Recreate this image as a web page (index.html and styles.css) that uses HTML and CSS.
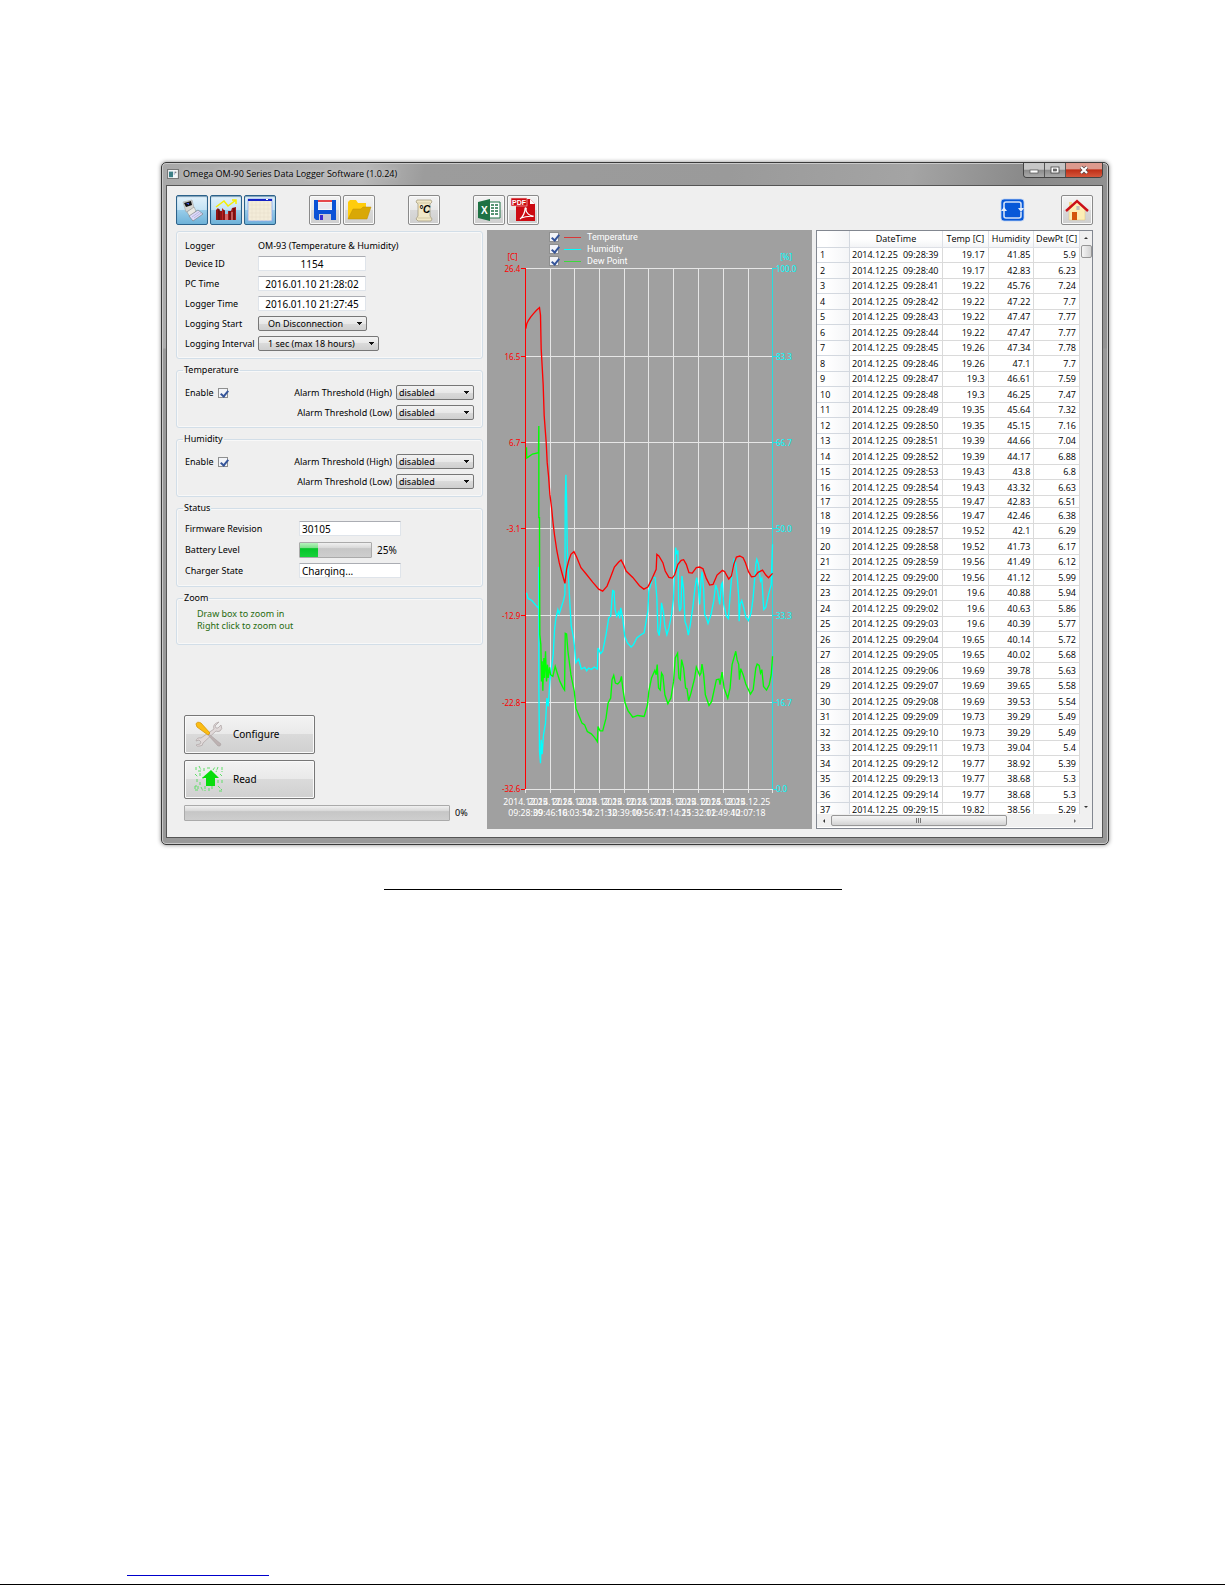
FILE: index.html
```
<!DOCTYPE html>
<html lang="en">
<head>
    <meta charset="UTF-8">
    <meta name="viewport" content="width=device-width, initial-scale=1.0">
    <title>Omega OM-90 Series Data Logger Software</title>
    <link rel="stylesheet" href="styles.css">
</head>
<body>

    <main class="window">
        <header class="titlebar">
            <svg class="app-icon" width="12" height="10" viewBox="0 0 12 10">
                <rect width="12" height="10" fill="#f4f6f8"/>
                <rect x="1" y="2" width="5" height="7" fill="#3c7f86"/>
                <rect x="7" y="2" width="1" height="4" fill="#8a9cc0"/>
                <rect x="9" y="2" width="1" height="2" fill="#333"/>
            </svg>
            <h1 class="title">Omega OM-90 Series Data Logger Software (1.0.24)</h1>
            <div class="window-buttons">
                <button class="win-btn" aria-label="Minimize">
                    <svg width="10" height="10" viewBox="0 0 10 10"><rect x="1" y="5" width="8" height="3" fill="#fff" stroke="#555" stroke-width=".7"/></svg>
                </button>
                <button class="win-btn" aria-label="Maximize">
                    <svg width="10" height="10" viewBox="0 0 10 10"><rect x="1" y="2" width="8" height="6" fill="#fff" stroke="#444" stroke-width=".8"/><rect x="3.500" y="4" width="3" height="2" fill="#777" stroke="#444" stroke-width=".6"/></svg>
                </button>
                <button class="win-btn close" aria-label="Close">
                    <svg width="10" height="10" viewBox="0 0 10 10"><path d="M2 2l6 6M8 2l-6 6" stroke="#544" stroke-width="3.600"/><path d="M2 2l6 6M8 2l-6 6" stroke="#fff" stroke-width="2.200"/></svg>
                </button>
            </div>
        </header>

        <div class="client">
            <div class="toolbar">
                <div class="tool-group">
                    <button class="tool active" aria-label="Logger">
                        <svg width="24" height="24" viewBox="0 0 24 24">
                            <path d="M3 4l9-2 2 8-8 4z" fill="#d6d6d2" stroke="#999" stroke-width=".5"/>
                            <path d="M4 5l7-2 1 4-6 2z" fill="#111"/>
                            <path d="M6 5l3 0 0 2z" fill="#4455ee"/>
                            <path d="M7 14l7-5 2 4-6 6z" fill="#e9e9e4" stroke="#888" stroke-width=".5"/>
                            <path d="M9 18l9-6 5 4-10 7z" fill="#dcd9f8" stroke="#777" stroke-width=".6"/>
                            <path d="M12 19l7-5M14 20l7-5" stroke="#a9a7d2" stroke-width=".7"/>
                        </svg>
                    </button>
                    <button class="tool active" aria-label="Graph">
                        <svg width="24" height="24" viewBox="0 0 24 24">
                            <path d="M2 22V12l2-2 2 3 2 0V22z" fill="#8e1515"/>
                            <path d="M8 22V10l3 3V22z" fill="#c02222"/>
                            <path d="M11 22v-6h3v6z" fill="#d86a6a"/>
                            <path d="M14 22v-9l3 0 1-3 4-1v13z" fill="#a51b1b"/>
                            <path d="M5 11v11M10 12v10M16 13v9M20 10v12" stroke="#4e0909"/>
                            <path d="M18 14v8" stroke="#e29a9a"/>
                            <path d="M2 9l8-6 4 5 8-6M18 2h4v4" fill="none" stroke="#f6ee00" stroke-width="1.500"/>
                        </svg>
                    </button>
                    <button class="tool active" aria-label="Table">
                        <svg width="26" height="24" viewBox="0 0 26 24">
                            <rect x="1" y="1" width="24" height="22" fill="#f3ecd9" stroke="#8ca6ee" stroke-width=".8"/>
                            <rect x="1" y="1" width="24" height="2" fill="#1522c4"/>
                            <rect x="19" y="1" width="2" height="1" fill="#fff"/>
                            <path d="M1 7h24M1 11h24M1 15h24M1 19h24M5 3v20M9 3v20M13 3v20M17 3v20M21 3v20" stroke="#e4dcc8" stroke-width=".5"/>
                        </svg>
                    </button>
                </div>
                <div class="tool-group">
                    <button class="tool" aria-label="Save">
                        <svg width="24" height="24" viewBox="0 0 24 24">
                            <path d="M1 2h22v20H3l-2-2z" fill="#0a51d6"/>
                            <rect x="5" y="2" width="14" height="10" fill="#f5f5f8"/>
                            <rect x="5" y="2" width="14" height="2" fill="#e5484e"/>
                            <path d="M5 6h14M5 8h14M5 10h14" stroke="#ccd" stroke-width=".6"/>
                            <rect x="6" y="16" width="12" height="6" fill="#c7c7d4"/>
                            <rect x="7" y="17" width="3" height="5" fill="#3a2ad0"/>
                        </svg>
                    </button>
                    <button class="tool" aria-label="Open">
                        <svg width="26" height="24" viewBox="0 0 26 24">
                            <path d="M2 21V4l2-2h6l2 3h8v5z" fill="#ffcc0d"/>
                            <path d="M2 21l5-10h8l2-2h8l-4 12z" fill="#d9a806" stroke="#c09000" stroke-width=".5"/>
                        </svg>
                    </button>
                </div>
                <div class="tool-group">
                    <button class="tool" aria-label="Temperature units">
                        <svg class="unit-icon" width="22" height="24" viewBox="0 0 22 24">
                            <path d="M4 2h14l1 2-2 2v12l2 3-1 2H5l-2-2 2-3V6L3 4z" fill="#f1e8c8" stroke="#9c9477" stroke-width=".7"/>
                            <path d="M4 5h13M5 20h13" stroke="#c5bb96" stroke-width=".7"/>
                            <text x="6" y="15">°C</text>
                        </svg>
                    </button>
                </div>
                <div class="tool-group">
                    <button class="tool" aria-label="Export to Excel">
                        <svg class="excel-icon" width="24" height="24" viewBox="0 0 24 24">
                            <path d="M12 4h11v16H12z" fill="#fff" stroke="#1f7244"/>
                            <path d="M14 7h3M18 7h3M14 10h3M18 10h3M14 13h3M18 13h3M14 16h3M18 16h3" stroke="#1f7244" stroke-width="1.500"/>
                            <path d="M1 4l12-3v22L1 20z" fill="#1f7244"/>
                            <text x="4" y="16">X</text>
                        </svg>
                    </button>
                    <button class="tool" aria-label="Export to PDF">
                        <svg class="pdf-icon" width="26" height="26" viewBox="0 0 26 26">
                            <path d="M6 2h14l5 5v17H6z" fill="#cc0a12"/>
                            <path d="M20 2v5h5z" fill="#fff"/>
                            <path d="M10 22c3-2 5-7 5-10 0-2 2-1 1 1 0 3 4 6 7 6 1 1-4-1-12 2" fill="none" stroke="#fff" stroke-width="1.200"/>
                            <rect x="1" y="1" width="16" height="8" fill="#cc0a12" stroke="#f7d5d5" stroke-width=".6"/>
                            <text x="2" y="8">PDF</text>
                        </svg>
                    </button>
                </div>
                <div class="tool-group right">
                    <button class="tool plain" aria-label="Reload">
                        <svg width="25" height="24" viewBox="0 0 25 24">
                            <rect x="1" y="1" width="23" height="22" rx="3" fill="#0758d8" stroke="#bcd3f5" stroke-width=".8"/>
                            <path d="M4 11V6q0-2 2-2h13q2 0 2 2v5M21 14v4q0 2-2 2H6q-2 0-2-2v-5" fill="none" stroke="#d3e1f7" stroke-width="1.600"/>
                            <path d="M1 13h6l-3-4zM18 10h6l-3 4z" fill="#e6eefb"/>
                        </svg>
                    </button>
                    <button class="tool" aria-label="Home">
                        <svg width="26" height="24" viewBox="0 0 26 24">
                            <path d="M5 4h3v6H5z" fill="#f3dc92"/>
                            <path d="M5 12l8-8 8 8v10H5z" fill="#fdeeb5" stroke="#dcc07c" stroke-width=".5"/>
                            <path d="M2 13L13 3l11 10" fill="none" stroke="#cc1018" stroke-width="2.400"/>
                            <rect x="8" y="14" width="5" height="8" fill="#d4560c"/>
                            <path d="M12 9h4M12 11h4M14 8v4" stroke="#8fa0c4" stroke-width=".7"/>
                        </svg>
                    </button>
                </div>
            </div>

            <div class="columns">
                <section class="settings">
                    <div class="group logger">
                        <span>Logger</span><span class="logger-name">OM-93 (Temperature &amp; Humidity)</span>
                        <label for="device">Device ID</label><input class="field centered" id="device" type="text" value="1154">
                        <label for="pc-time">PC Time</label><input class="field centered" id="pc-time" type="text" value="2016.01.10 21:28:02">
                        <label for="logger-time">Logger Time</label><input class="field centered" id="logger-time" type="text" value="2016.01.10 21:27:45">
                        <label for="start">Logging Start</label>
                        <select class="combo inset" id="start"><option>On Disconnection</option></select>
                        <label for="interval">Logging Interval</label>
                        <select class="combo inset long" id="interval"><option>1 sec (max 18 hours)</option></select>
                    </div>

                    <fieldset class="group alarm">
                        <legend>Temperature</legend>
                        <label class="enable">Enable <input class="check" type="checkbox" checked></label>
                        <label for="t-high">Alarm Threshold (High)</label>
                        <select class="combo" id="t-high"><option>disabled</option></select>
                        <label class="second" for="t-low">Alarm Threshold (Low)</label>
                        <select class="combo" id="t-low"><option>disabled</option></select>
                    </fieldset>

                    <fieldset class="group alarm">
                        <legend>Humidity</legend>
                        <label class="enable">Enable <input class="check" type="checkbox" checked></label>
                        <label for="h-high">Alarm Threshold (High)</label>
                        <select class="combo" id="h-high"><option>disabled</option></select>
                        <label class="second" for="h-low">Alarm Threshold (Low)</label>
                        <select class="combo" id="h-low"><option>disabled</option></select>
                    </fieldset>

                    <fieldset class="group status">
                        <legend>Status</legend>
                        <label for="firmware">Firmware Revision</label><input class="field" id="firmware" type="text" value="30105">
                        <span>Battery Level</span>
                        <div class="battery"><div class="bar"><div class="bar-fill" style="width: 25%"></div></div>25%</div>
                        <label for="charger">Charger State</label><input class="field" id="charger" type="text" value="Charging...">
                    </fieldset>

                    <fieldset class="group zoom">
                        <legend>Zoom</legend>
                        <p>Draw box to zoom in</p>
                        <p>Right click to zoom out</p>
                    </fieldset>

                    <div class="actions">
                        <button class="action">
                            <svg width="30" height="28" viewBox="0 0 30 28">
                                <path d="M25 2l-4 4 1 2 2 0 3-3q2 4-1 6-2 1-4 0L9 23q0 3-3 3-3 1-4-1l4-1 1-2-2-2-3 1q1-4 5-3L20 9q-2-5 5-7z" fill="#e0d9d9" stroke="#b3a9a9" stroke-width=".8"/>
                                <path d="M15 14l12 10-1 2-2 0-10-11z" fill="#bdb2b2" stroke="#a39999" stroke-width=".5"/>
                                <path d="M2 4q1-3 5-1l9 10-2 2L3 7z" fill="#fbbd14" stroke="#d69506" stroke-width=".8"/>
                            </svg>
                            Configure
                        </button>
                        <button class="action">
                            <svg width="30" height="28" viewBox="0 0 30 28">
                                <path d="M2 2v3M5 1l2 4M10 3v3M24 2l-2 5M28 2v5M19 5l2-3M1 9l3 3M6 8v3M3 14v4M6 17v3M1 21v4h3v-4zM7 22l2 4M11 21v5M15 23v4M18 21v3M24 15v3M28 15v4M24 21l4 4M25 26h3M26 9l2 2M13 3h3M4 6h3M8 13h2" fill="none" stroke="#5fdd67" stroke-dasharray="3 1"/>
                                <path d="M17 5l8 8h-4v8h-9v-8H8z" fill="#08dd0c"/>
                            </svg>
                            Read
                        </button>
                        <div class="progress"><div class="bar"></div>0%</div>
                    </div>
                </section>

                <section class="chart">
                    <div class="legend">
                        <label><input class="check" type="checkbox" checked><i class="line red"></i>Temperature</label>
                        <label><input class="check" type="checkbox" checked><i class="line cyan"></i>Humidity</label>
                        <label><input class="check" type="checkbox" checked><i class="line green"></i>Dew Point</label>
                    </div>
                    <!-- three units make one pixel -->
                    <svg class="plot" viewBox="24 -810 972 1791">
                        <path class="grid" d="M214-695V874M286-695V874M361-695V874M436-695V874M508-695V874M583-695V874M658-695V874M730-695V874M805-695V874M139 862V874M878 862V874"/>
                        <path class="grid" d="M139-695H878M139-432H878M139-173H878M139 82H878M139 343H878M139 604H878M139 862H878"/>
                        <path class="axis red" d="M139-695V862M126-695h13M126-432h13M126-173h13M126 82h13M126 343h13M126 604h13M126 862h13"/>
                        <path class="axis cyan" d="M878-695V862M878-695h12M878-432h12M878-173h12M878 82h12M878 343h12M878 604h12M878 862h12"/>
                        <polyline class="curve cyan" points="142,275 147,292 158,298 170,312 179,322 179,198 179,550 181,750 184,785 186,715 189,758 193,700 199,665 203,590 207,615 212,540 218,490 222,460 226,385 230,352 236,325 240,338 245,322 252,300 257,280 258,0 260,-78 262,0 264,140 267,215 272,310 276,375 282,405 286,440 290,484 298,473 306,503 316,498 322,508 328,500 336,504 345,497 354,503 356,440 364,457 370,450 380,400 388,350 394,345 398,290 400,268 404,270 407,325 412,345 418,332 421,352 424,320 430,352 436,405 444,425 455,437 462,430 472,410 482,402 494,395 500,360 505,330 508,270 514,250 520,228 527,230 532,290 535,390 539,403 543,365 546,305 552,335 556,375 562,400 568,380 576,340 582,290 586,190 588,140 592,160 595,148 597,300 600,330 604,320 607,225 612,265 616,360 622,378 626,402 632,370 640,315 646,260 651,230 656,258 660,310 664,240 667,212 672,265 675,340 680,350 685,367 694,340 702,300 708,252 714,270 720,310 725,250 728,245 732,310 740,345 746,352 752,270 757,215 763,175 767,180 773,235 777,290 778,360 781,310 786,298 792,320 798,348 806,358 814,335 820,290 828,190 831,175 836,190 842,240 846,232 850,300 852,325 858,318 866,280 874,250 878,130"/>
                        <polyline class="curve green" points="142,-160 143,-128 150,-133 160,-140 178,-144 179,-224 179,50 181,50 182,400 185,430 187,540 189,480 191,568 194,470 196,530 199,450 202,540 205,490 207,530 211,498 214,520 221,525 228,495 234,515 242,540 252,560 256,566 258,396 262,398 266,450 275,520 285,570 290,620 300,645 308,665 316,670 324,690 336,697 346,708 354,720 356,675 362,688 370,688 380,650 386,605 394,590 398,535 403,522 408,545 415,548 422,540 426,525 430,560 437,605 446,628 460,647 475,642 494,645 504,610 508,570 516,530 526,507 530,520 533,490 537,560 542,566 546,515 550,522 556,580 565,607 574,590 582,540 587,470 594,456 598,530 602,535 606,475 612,500 618,560 622,562 627,598 634,575 645,530 650,497 660,522 664,515 667,488 672,520 677,580 688,612 696,600 710,535 718,533 721,550 727,512 733,560 744,590 751,560 757,490 768,450 772,475 777,490 779,535 783,502 790,520 798,548 812,578 820,565 828,500 832,488 838,492 842,515 846,505 851,555 860,566 868,550 874,520 878,465"/>
                        <polyline class="curve red" points="140,-515 143,-530 148,-540 155,-550 163,-560 172,-570 181,-578 184,-555 186,-455 189,-402 192,-347 195,-255 198,-215 201,-175 204,-115 208,-75 212,-20 217,20 222,70 226,103 233,150 240,185 248,215 257,247 262,205 268,180 275,160 284,152 292,168 305,200 320,218 340,243 358,264 370,270 383,255 393,230 405,198 418,183 425,177 432,190 440,210 460,229 480,254 493,264 505,258 515,238 530,205 532,160 538,165 550,185 557,210 568,229 578,231 585,222 595,190 605,178 612,176 620,190 628,215 638,216 650,200 660,198 670,203 680,232 690,252 700,250 712,222 728,208 735,212 747,234 755,225 762,190 770,168 780,165 790,170 797,185 806,212 815,227 825,226 835,214 848,207 858,222 866,230 878,217"/>
                        <g class="ticks red">
                            <text x="116" y="-721">[C]</text>
                            <text x="124" y="-685">26.4</text>
                            <text x="124" y="-422">16.5</text>
                            <text x="124" y="-163">6.7</text>
                            <text x="124" y="92">-3.1</text>
                            <text x="124" y="353">-12.9</text>
                            <text x="124" y="614">-22.8</text>
                            <text x="124" y="872">-32.6</text>
                        </g>
                        <g class="ticks cyan">
                            <text x="901" y="-721">[%]</text>
                            <text x="888" y="-685">100.0</text>
                            <text x="888" y="-422">83.3</text>
                            <text x="888" y="-163">66.7</text>
                            <text x="888" y="92">50.0</text>
                            <text x="888" y="353">33.3</text>
                            <text x="888" y="614">16.7</text>
                            <text x="888" y="872">0.0</text>
                        </g>
                        <g class="ticks dates" id="dates"></g>
                    </svg>
                </section>

                <section class="data">
                    <div class="table-view">
                        <table class="readings">
                            <thead>
                                <tr><th class="num"></th><th class="date">DateTime</th><th>Temp [C]</th><th>Humidity</th><th>DewPt [C]</th></tr>
                            </thead>
                            <tbody id="rows"></tbody>
                        </table>
                    </div>
                    <div class="vscroll"><span class="arrow up"></span><span class="thumb"></span><span class="arrow down"></span></div>
                    <div class="hscroll"><span class="arrow left"></span><span class="thumb"></span><span class="arrow next"></span></div>
                </section>
            </div>
        </div>
    </main>

    <div class="caption-line"></div>

    <footer class="footer">
        <div class="footer-link"></div>
    </footer>

    <script>
        // temperature, humidity, dew point; one reading per second
        const readings = [
            [19.17, 41.85, 5.9], [19.17, 42.83, 6.23], [19.22, 45.76, 7.24], [19.22, 47.22, 7.7],
            [19.22, 47.47, 7.77], [19.22, 47.47, 7.77], [19.26, 47.34, 7.78], [19.26, 47.1, 7.7],
            [19.3, 46.61, 7.59], [19.3, 46.25, 7.47], [19.35, 45.64, 7.32], [19.35, 45.15, 7.16],
            [19.39, 44.66, 7.04], [19.39, 44.17, 6.88], [19.43, 43.8, 6.8], [19.43, 43.32, 6.63],
            [19.47, 42.83, 6.51], [19.47, 42.46, 6.38], [19.52, 42.1, 6.29], [19.52, 41.73, 6.17],
            [19.56, 41.49, 6.12], [19.56, 41.12, 5.99], [19.6, 40.88, 5.94], [19.6, 40.63, 5.86],
            [19.6, 40.39, 5.77], [19.65, 40.14, 5.72], [19.65, 40.02, 5.68], [19.69, 39.78, 5.63],
            [19.69, 39.65, 5.58], [19.69, 39.53, 5.54], [19.73, 39.29, 5.49], [19.73, 39.29, 5.49],
            [19.73, 39.04, 5.4], [19.77, 38.92, 5.39], [19.77, 38.68, 5.3], [19.77, 38.68, 5.3],
            [19.82, 38.56, 5.29]
        ];
        const shortRow = 17;

        document.getElementById('rows').innerHTML = readings.map((r, i) => {
            const sec = 39 + i;
            const time = sec < 60 ? `09:28:${sec}` : `09:29:${String(sec - 60).padStart(2, '0')}`;
            const cls = i + 1 === shortRow ? ' class="short"' : '';
            return `<tr${cls}><th class="num">${i + 1}</th><td class="date"><span>2014.12.25</span><span>${time}</span></td><td>${r[0]}</td><td>${r[1]}</td><td>${r[2]}</td></tr>`;
        }).join('');

        const ticks = [
            [139, '09:28:39'], [214, '09:46:16'], [286, '10:03:54'], [361, '10:21:32'], [436, '10:39:09'],
            [508, '10:56:47'], [583, '11:14:25'], [658, '11:32:02'], [730, '11:49:40'], [805, '12:07:18']
        ];
        document.getElementById('dates').innerHTML = ticks.map(t =>
            `<text x="${t[0]}" y="911">2014.12.25</text><text x="${t[0]}" y="942">${t[1]}</text>`
        ).join('');
    </script>

</body>
</html>
```
FILE: styles.css
```
* {
    box-sizing: border-box;
}
body {
    margin: 0;
    min-height: 100vh;
    display: flex;
    flex-direction: column;
    background: #ffffff;
    color: #000000;
    font: 9px/12px "Noto Sans", "Open Sans", sans-serif;
}
button, input, select {
    font-family: inherit;
    font-size: 10px;
    color: inherit;
    margin: 0;
    padding: 0;
}
svg {
    display: block;
}

/* window frame */
.window {
    margin: 162px 116px 0 161px;
    padding: 0 5px 6px 4px;
    border: 1px solid #3a3a3a;
    border-radius: 5px;
    background:
        linear-gradient(to bottom, transparent 185px, #999999 186px) no-repeat,
        linear-gradient(100deg, #a9a9a9 0, #b8b8b8 200px, #9c9c9c 260px, #9a9a9a 560px, #a4a4a4 740px, #8a8a8a 850px, #9a9a9a 100%);
    box-shadow: 0 0 4px #888888, inset 0 0 0 1px #c9c9c9;
}
.titlebar {
    display: flex;
    align-items: flex-start;
    height: 22px;
}
.app-icon {
    margin: 6px 0 0 1px;
    border: 1px solid #777777;
}
.title {
    margin: 4px 0 0 4px;
    font: 9px/14px "Open Sans", "Noto Sans", sans-serif;
    text-shadow: 0 0 4px #dddddd;
}
.window-buttons {
    display: flex;
    margin-left: auto;
    border: 1px solid #444444;
    border-top: 0;
    border-radius: 0 0 4px 4px;
    overflow: hidden;
}
.win-btn {
    display: flex;
    align-items: center;
    justify-content: center;
    width: 21px;
    height: 14px;
    border: 0;
    border-right: 1px solid #555555;
    background: linear-gradient(#c6c6c6 45%, #8b8b8b 50%, #aaaaaa);
}
.win-btn.close {
    width: 36px;
    border-right: 0;
    background: linear-gradient(#dc9a8e 40%, #bf2f17 50%, #d5573c);
}
.client {
    padding: 9px 9px 8px;
    border: 1px solid #555555;
    background: #efefef;
}

/* toolbar */
.toolbar {
    display: flex;
    gap: 33px;
    margin-bottom: 5px;
}
.tool-group {
    display: flex;
    gap: 2px;
}
.tool-group.right {
    margin-left: auto;
    gap: 33px;
}
.tool {
    display: flex;
    align-items: center;
    justify-content: center;
    width: 32px;
    height: 30px;
    border: 1px solid #8a8a8a;
    border-radius: 2px;
    background: linear-gradient(#f3f3f3, #e8e8e8 50%, #d9d9d9 50%, #cfcfcf);
    box-shadow: inset 0 0 0 1px #fafafa;
}
.tool.active {
    border-color: #2c628b;
    background: linear-gradient(#e3f2fb, #c4e3f5 50%, #98cdea 50%, #6fb2d8);
    box-shadow: inset 0 1px 1px #7a9db5;
}
.tool.plain {
    border: 0;
    background: none;
    box-shadow: none;
}
.unit-icon text {
    font: italic bold 10px "Liberation Sans", sans-serif;
}
.excel-icon text {
    font: bold 10px "Liberation Sans", sans-serif;
    fill: #ffffff;
}
.pdf-icon text {
    font: bold 7px "Liberation Sans", sans-serif;
    fill: #ffffff;
}

.columns {
    display: flex;
    gap: 4px;
}

/* left side */
.settings {
    display: flex;
    flex-direction: column;
    gap: 5px;
    width: 307px;
}
.group {
    min-width: 0;
    margin: 0;
    padding: 0 8px;
    border: 1px solid #d2dee8;
    border-radius: 3px;
    box-shadow: inset 0 0 0 1px #f8f8f8;
}
.group legend {
    padding: 0 1px;
    margin-left: -2px;
    line-height: 12px;
    text-align: left;
}
.logger {
    display: grid;
    grid-template-columns: 73px 1fr;
    grid-template-rows: 11px repeat(5, 15px);
    gap: 5px 0;
    align-items: center;
    margin-top: 1px;
    padding-top: 8px;
    padding-bottom: 7px;
}
.field {
    width: 102px;
    height: 15px;
    padding: 0 2px;
    border: 1px solid #dfe4ea;
    border-top-color: #abadb3;
    border-radius: 1px;
    background: #ffffff;
}
.field.centered {
    width: 108px;
    text-align: center;
}
.combo {
    appearance: none;
    width: 78px;
    height: 15px;
    padding: 0 2px;
    border: 1px solid #777777;
    border-radius: 2px;
    font-size: 9px;
    line-height: 13px;
    background:
        linear-gradient(#111111, #111111) right 4px top 5px / 5px 1px no-repeat,
        linear-gradient(#111111, #111111) right 5px top 6px / 3px 1px no-repeat,
        linear-gradient(#111111, #111111) right 6px top 7px / 1px 1px no-repeat,
        linear-gradient(#f2f2f2, #e8e8e8 50%, #dadada 50%, #cfcfcf);
}
.combo.inset {
    width: 109px;
    padding-left: 9px;
}
.combo.long {
    width: 121px;
}
.check {
    appearance: none;
    position: relative;
    flex: none;
    width: 10px;
    height: 10px;
    border: 1px solid #8e8f8f;
    background: #f2f4f8;
}
.check:checked::before {
    content: "";
    position: absolute;
    left: 3px;
    top: 0;
    width: 3px;
    height: 6px;
    border: solid #35559a;
    border-width: 0 2px 2px 0;
    transform: rotate(40deg);
}
.alarm {
    display: grid;
    grid-template-columns: auto 1fr 78px;
    gap: 5px 4px;
    align-items: center;
    padding-top: 9px;
    padding-bottom: 7px;
    text-align: right;
}
.alarm .combo {
    text-align: left;
}
.alarm .second {
    grid-column: 2;
}
.enable {
    display: flex;
    align-items: center;
    gap: 4px;
}
.status {
    display: grid;
    grid-template-columns: 114px 1fr;
    grid-template-rows: repeat(3, 15px);
    gap: 6px 0;
    align-items: center;
    padding-top: 7px;
    padding-bottom: 8px;
}
.battery, .progress {
    display: flex;
    align-items: center;
    gap: 5px;
}
.battery {
    font-size: 10px;
}
.bar {
    width: 73px;
    height: 16px;
    border: 1px solid #aaaaaa;
    border-radius: 1px;
    background: linear-gradient(#f0f0f0, #d8d8d8 35%, #c6c6c6 40%, #cecece);
}
.bar-fill {
    height: 100%;
    background: linear-gradient(#b6f3bd, #7de08a 35%, #05c52a 40%, #17d13a);
}
.zoom {
    padding: 4px 20px 12px;
    color: #1f6b0e;
}
.zoom legend {
    margin-left: -14px;
    color: #000000;
}
.zoom p {
    margin: 0;
}
.actions {
    display: flex;
    flex-direction: column;
    align-items: flex-start;
    gap: 6px;
    margin-top: auto;
    padding: 0 0 8px 8px;
}
.action {
    display: flex;
    align-items: center;
    gap: 9px;
    width: 131px;
    height: 39px;
    padding-left: 9px;
    border: 1px solid #777777;
    border-radius: 2px;
    background: linear-gradient(#f3f3f3, #e9e9e9 50%, #dadada 50%, #d0d0d0);
    box-shadow: inset 0 0 0 1px #fafafa;
}
.progress {
    align-self: stretch;
}
.progress .bar {
    width: 266px;
}

/* chart */
.chart {
    position: relative;
    flex: 1;
    background: #a0a0a0;
}
.plot {
    width: 100%;
    height: auto;
}
.legend {
    position: absolute;
    left: 62px;
    top: 1px;
    color: #ffffff;
    font-family: Roboto, sans-serif;
}
.legend label {
    display: flex;
    align-items: center;
    height: 12px;
}
.line {
    width: 17px;
    height: 1px;
    margin: 0 6px 0 5px;
}
.line.red {
    background: #d83838;
}
.line.cyan {
    background: #00ffff;
}
.line.green {
    background: #3cd83c;
}
.grid {
    fill: none;
    stroke: #e6e6e6;
    stroke-width: 3px;
    shape-rendering: crispEdges;
}
.axis, .curve {
    fill: none;
    stroke-width: 3px;
}
.axis {
    shape-rendering: crispEdges;
}
.curve {
    stroke-width: 4px;
}
.axis.red, .curve.red {
    stroke: #ff0000;
}
.axis.cyan, .curve.cyan {
    stroke: #00ffff;
}
.curve.green {
    stroke: #00ff00;
}
.axis.cyan {
    stroke: #26dede;
}
.ticks {
    font-size: 24px;
}
.ticks.red {
    fill: #ff0000;
    text-anchor: end;
}
.ticks.cyan {
    fill: #00ffff;
}
.ticks.dates {
    font-size: 26px;
    fill: #ffffff;
    text-anchor: middle;
}

/* readings */
.data {
    display: grid;
    grid-template-columns: 1fr 12px;
    grid-template-rows: 583px 13px;
    width: 277px;
    border: 1px solid #828790;
    background: #ffffff;
}
.table-view {
    overflow: hidden;
}
.readings {
    width: 100%;
    table-layout: fixed;
    border-collapse: separate;
    border-spacing: 0;
    font-family: "Open Sans", "Noto Sans", sans-serif;
}
.readings th, .readings td {
    padding: 0 3px 0 0;
    border: solid #dadada;
    border-width: 0 1px 1px 0;
    line-height: 14px;
    font-weight: normal;
    text-align: right;
    white-space: nowrap;
}
.readings thead th {
    height: 17px;
    border-color: #dde0e6;
    background: linear-gradient(#ffffff 50%, #f3f4f6);
    text-align: center;
    padding: 0;
}
.readings tr:nth-child(even) td {
    line-height: 15px;
}
.readings .short th, .readings .short td {
    line-height: 11px;
}
.readings .num {
    width: 33px;
    padding-left: 3px;
    border-color: #d3d8df;
    background: linear-gradient(to right, #ffffff 30%, #f4f5f7);
    text-align: left;
}
.readings .date {
    width: 93px;
}
.readings td.date {
    padding-left: 2px;
    text-align: left;
}
.date span + span {
    margin-left: 5px;
}
.vscroll, .hscroll {
    display: flex;
    align-items: center;
    background: #f0f0f0;
}
.vscroll {
    flex-direction: column;
}
.hscroll {
    grid-column: 1 / 3;
    padding-right: 14px;
}
.thumb {
    border: 1px solid #979797;
    border-radius: 2px;
}
.vscroll .thumb {
    width: 11px;
    height: 13px;
    background: linear-gradient(to right, #f5f5f5, #d2d2d2);
}
.hscroll .thumb {
    width: 176px;
    height: 11px;
    background:
        repeating-linear-gradient(to right, #777777 0 1px, transparent 1px 2px) center / 6px 5px no-repeat,
        linear-gradient(#f5f5f5, #e6e6e6 50%, #d2d2d2);
}
.arrow {
    border: 2px solid transparent;
}
.arrow.up {
    margin: 4px 0 6px;
    border-bottom-color: #333333;
}
.arrow.down {
    margin: auto 0 4px;
    border-top-color: #333333;
}
.arrow.left {
    margin: 0 6px 0 4px;
    border-right-color: #333333;
}
.arrow.next {
    margin-left: auto;
    border-left-color: #777777;
}

/* below the window */
.caption-line {
    align-self: center;
    width: 458px;
    height: 1px;
    margin-top: 44px;
    background: #000000;
}
.footer {
    margin-top: auto;
    padding: 0 127px 8px;
    border-bottom: 1px solid #000000;
}
.footer-link {
    width: 142px;
    height: 1px;
    background: #0000cc;
}
```
